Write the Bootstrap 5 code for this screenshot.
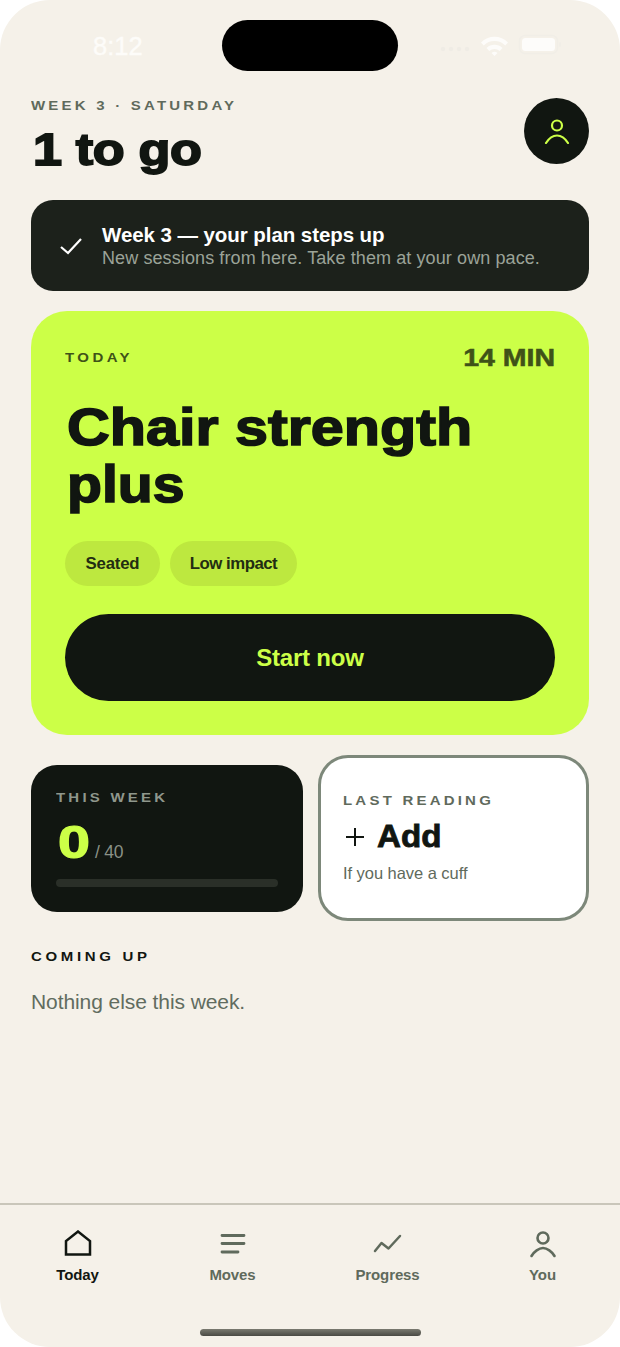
<!DOCTYPE html>
<html lang="en"><head><meta charset="utf-8"><title>Today</title>
<link href="https://cdn.jsdelivr.net/npm/bootstrap@5.3.0/dist/css/bootstrap.min.css" rel="stylesheet">
<style>
html,body{margin:0;height:100%;background:#fff}
body{font-family:"Liberation Sans",Arial,sans-serif;color:#111611}
.phone{width:620px;height:1347px;background:#f5f1e9;border-radius:50px;overflow:hidden;position:relative}
.island{position:absolute;left:222px;top:20px;width:176px;height:51px;border-radius:26px;background:#000}
.sbar{height:98px;position:relative;color:#fdfcf9}
.clock{position:absolute;left:93px;top:31px;font-size:25.500px;line-height:30px;-webkit-text-stroke:.4px #fdfcf9}
.sicons{position:absolute;left:440px;top:34px}
.eyebrow,.lab,.t-today{display:block;font-weight:700;font-size:13.500px;line-height:16px;letter-spacing:2.900px;white-space:nowrap;transform:scaleX(1.11);transform-origin:0 50%}
.eyebrow{color:#5f6a5c}
.head{padding:0 31px;height:102px}
.big{display:block;font-weight:700;font-size:45px;line-height:50px;letter-spacing:-.3px;-webkit-text-stroke:1.800px #111611;transform:scaleX(1.16);transform-origin:0 50%;margin-top:11px;margin-left:2px;white-space:nowrap}
.avatar{width:65px;height:66px;border-radius:50%;background:#111611}
.notice{margin:0 31px;height:91px;background:#1c211b;border-radius:22px;color:#fff}
.notice-a{font-weight:700;font-size:20.500px;line-height:24px;letter-spacing:-.07px}
.notice-b{font-size:18px;line-height:22px;color:#9ba398;letter-spacing:.1px}
.notice-ic{width:71px;padding-left:9px}
.hero{margin:20px 31px 0;height:424px;background:#ccff47;border-radius:36px;padding:34px}
.hero-top{height:26px}
.t-today{letter-spacing:3.100px;color:#3f5218;line-height:26px}
.t-min{font-weight:700;font-size:23px;line-height:26px;color:#3f5218;-webkit-text-stroke:.5px #3f5218;transform:scaleX(1.24);transform-origin:100% 50%;white-space:nowrap}
.hero-h{font-weight:700;font-size:52px;line-height:57px;margin-top:28px;height:114px;color:#111611;-webkit-text-stroke:1.600px #111611}
.hero-h span{display:block;transform:scaleX(1.14);transform-origin:0 50%;white-space:nowrap;margin-left:2px}
.hero-h span+span{transform:scaleX(1.1)}
.pills{margin-top:28px;gap:10px}
.tag{height:45px;border-radius:23px;background:#bde83f;color:#222d12;font-size:16.800px;font-weight:700;line-height:45px;padding:0 20.500px;letter-spacing:-.2px}
.tag+.tag{padding:0 20px;letter-spacing:-.5px}
.cta{display:block;width:100%;height:87px;border-radius:44px;background:#111611;border:0;color:#ccff47;font-weight:700;font-size:24px;margin-top:28px;letter-spacing:-.2px}
.duo{margin:20px 31px 0;gap:15px;height:166px}
.tile{width:272px;height:147px;background:#111611;border-radius:26px;padding:25px;flex:none}
.tile-b{width:271px;height:166px;background:#fff;border:3px solid #7d887a;border-radius:30px;padding:35px 22px 0;flex:none}
.lab-a{color:#8f978c}
.lab-b{color:#5f6a5c}
.lab-c{color:#111611;letter-spacing:3.300px}
.score{margin-top:16px;height:40px}
.num{font-weight:700;font-size:46px;line-height:40px;color:#ccff47;-webkit-text-stroke:1.200px #ccff47;transform:scaleX(1.25);transform-origin:0 50%;margin-left:2px;width:32px}
.of{font-size:17.500px;color:#8a9287;margin-left:5px;line-height:20px;letter-spacing:-.2px}
.track{height:8px;border-radius:4px;background:#2a2f28;margin-top:17px}
.addrow{margin-top:10px}
.add{font-weight:700;font-size:31px;line-height:36px;-webkit-text-stroke:.8px #111611;transform:scaleX(1.07);transform-origin:0 50%}
.plus{margin:0 13px 0 3px}
.sub{font-size:16.500px;line-height:20px;color:#5f6a5c;margin-top:8px;letter-spacing:-.05px}
.coming{padding:28px 31px 0}
.none{font-size:21px;line-height:26px;color:#616c5f;margin-top:24px;letter-spacing:-.08px}
.tabs{position:absolute;left:0;right:0;bottom:0;height:144px;border-top:2px solid #c9c6ba}
.tab{flex:1 1 25%;padding-top:25px;text-align:center;color:#5f6a5c;font-weight:700;font-size:15px;line-height:18px;letter-spacing:-.1px}
.tab svg{display:block;margin:0 auto 6px}
.tab.on{color:#111611}
.homebar{position:absolute;left:200px;top:1329px;width:221px;height:7px;border-radius:4px;background:linear-gradient(#7a7a70,#4a4a44)}
</style></head><body>
<div class="phone">
 <div class="sbar">
  <div class="island"></div>
  <div class="clock">8:12</div>
  <svg class="sicons" width="124" height="24" viewBox="0 0 124 24">
   <g fill="#efece5"><circle cx="3" cy="15" r="2.200"/><circle cx="11" cy="15" r="2.200"/><circle cx="19" cy="15" r="2.200"/><circle cx="27" cy="15" r="2.200"/></g>
   <path d="M41 8.500a19 19 0 0 1 27 0l-2.800 3a15 15 0 0 0-21.400 0zM46.500 14a11.500 11.500 0 0 1 16 0l-2.800 3a7.500 7.500 0 0 0-10.400 0zM51.500 19a4.500 4.500 0 0 1 6 0L54.500 22z" fill="#fdfcfa"/>
   <rect x="79.500" y="1.500" width="38" height="18" rx="5.500" fill="none" stroke="#f1eee7" stroke-width="1.500"/>
   <rect x="82" y="4" width="33" height="13" rx="3.500" fill="#fdfcfa"/>
   <rect x="119" y="8" width="2" height="5" rx="1" fill="#f1eee7"/>
  </svg>
 </div>
 <div class="head d-flex justify-content-between align-items-start">
  <div>
   <div class="eyebrow">WEEK 3 · SATURDAY</div>
   <div class="big">1 to go</div>
  </div>
  <div class="avatar d-flex align-items-center justify-content-center">
   <svg width="26" height="26" viewBox="0 0 26 26" fill="none" stroke="#ccff47" stroke-width="2.200" stroke-linecap="round"><circle cx="13" cy="7.500" r="5"/><path d="M2 25C4.500 21 9 17.500 13 17.500S21.500 21 24 25"/></svg>
  </div>
 </div>
 <div class="notice d-flex align-items-center">
  <div class="notice-ic d-flex justify-content-center">
   <svg width="24" height="18" viewBox="0 0 24 18" fill="none" stroke="#fff" stroke-width="2.200"><path d="M2 10l7 6L22 2"/></svg>
  </div>
  <div>
   <div class="notice-a">Week 3 — your plan steps up</div>
   <div class="notice-b">New sessions from here. Take them at your own pace.</div>
  </div>
 </div>
 <div class="hero">
  <div class="hero-top d-flex justify-content-between">
   <div class="t-today">TODAY</div>
   <div class="t-min">14 MIN</div>
  </div>
  <div class="hero-h"><span>Chair strength</span><span>plus</span></div>
  <div class="pills d-flex"><div class="tag">Seated</div><div class="tag">Low impact</div></div>
  <button class="cta" type="button">Start now</button>
 </div>
 <div class="duo d-flex align-items-center">
  <div class="tile">
   <div class="lab lab-a">THIS WEEK</div>
   <div class="score d-flex align-items-end"><div class="num">0</div><div class="of">/ 40</div></div>
   <div class="track"></div>
  </div>
  <div class="tile-b">
   <div class="lab lab-b">LAST READING</div>
   <div class="addrow d-flex align-items-center">
    <svg class="plus" width="18" height="18" viewBox="0 0 18 18" stroke="#111611" stroke-width="2"><path d="M9 0v18M0 9h18"/></svg>
    <div class="add">Add</div>
   </div>
   <div class="sub">If you have a cuff</div>
  </div>
 </div>
 <div class="coming">
  <div class="lab lab-c">COMING UP</div>
  <div class="none">Nothing else this week.</div>
 </div>
 <div class="tabs d-flex">
  <div class="tab on"><svg width="30" height="30" viewBox="0 0 30 30" fill="none" stroke="#111611" stroke-width="2.500"><path d="M3 24.500V11L15 1.500 27 11v13.500z"/></svg>Today</div>
  <div class="tab"><svg width="30" height="30" viewBox="0 0 30 30" fill="none" stroke="#5f6a5c" stroke-width="2.800" stroke-linecap="round"><path d="M4 5.500h22M4 13.500h22M4 22h16"/></svg>Moves</div>
  <div class="tab"><svg width="30" height="30" viewBox="0 0 30 30" fill="none" stroke="#5f6a5c" stroke-width="2.500" stroke-linecap="round" stroke-linejoin="round"><path d="M2 21l6.500-8 7 5.500L27 6"/></svg>Progress</div>
  <div class="tab"><svg width="30" height="30" viewBox="0 0 30 30" fill="none" stroke="#5f6a5c" stroke-width="2.600" stroke-linecap="round"><circle cx="15" cy="8" r="5.500"/><path d="M3.500 26C6 21.500 11 18 15 18s9 3.500 11.500 8"/></svg>You</div>
 </div>
 <div class="homebar"></div>
</div>
<script src="https://cdn.jsdelivr.net/npm/bootstrap@5.3.0/dist/js/bootstrap.bundle.min.js"></script>
</body></html>
